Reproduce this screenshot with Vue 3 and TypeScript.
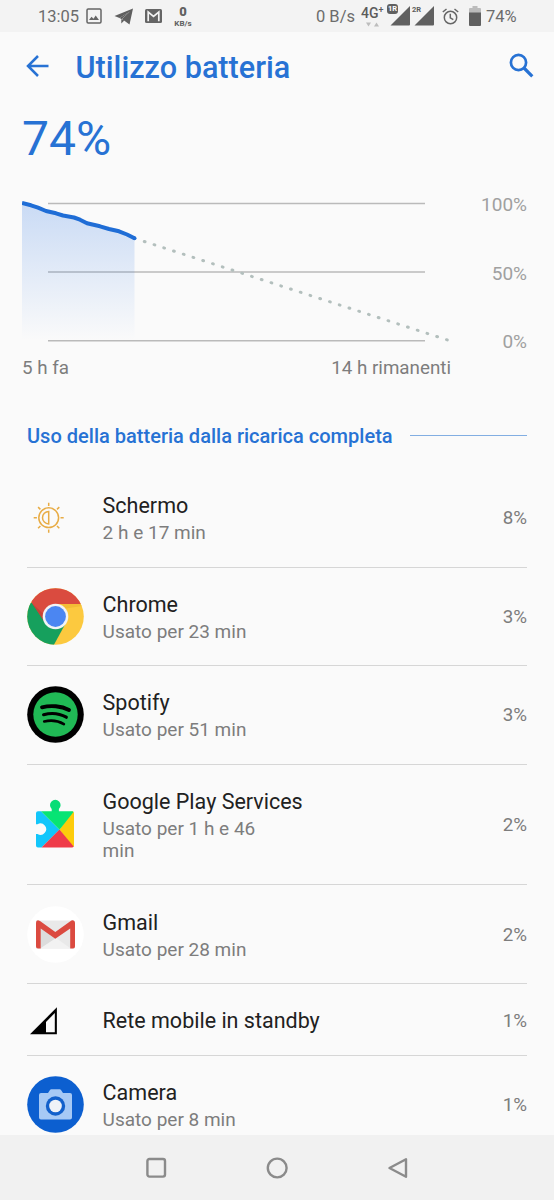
<script setup lang="ts">
import { ref } from 'vue'

type Usage = {
  icon: string
  name: string
  detail: string
  percent: number
}

const level = ref(74)

const usages = ref<Usage[]>([
  { icon: 'screen', name: 'Schermo', detail: '2 h e 17 min', percent: 8 },
  { icon: 'chrome', name: 'Chrome', detail: 'Usato per 23 min', percent: 3 },
  { icon: 'spotify', name: 'Spotify', detail: 'Usato per 51 min', percent: 3 },
  { icon: 'play', name: 'Google Play Services', detail: 'Usato per 1 h e 46 min', percent: 2 },
  { icon: 'gmail', name: 'Gmail', detail: 'Usato per 28 min', percent: 2 },
  { icon: 'signal', name: 'Rete mobile in standby', detail: '', percent: 1 },
  { icon: 'camera', name: 'Camera', detail: 'Usato per 8 min', percent: 1 }
])
</script>

<template>
  <div class="screen">
    <div class="status">
      <span class="clock">13:05</span>
      <svg class="picture" width="16" height="16" viewBox="0 0 16 16">
        <rect x="1" y="1" width="14" height="14" rx="1.2" fill="none" stroke="#656565" stroke-width="1.5" />
        <path d="M3 12l2.5-3.2 2 2 2.2-3.3L13 12z" fill="#656565" />
      </svg>
      <svg class="telegram" width="20" height="17" viewBox="0 0 20 17">
        <path d="M19 .5L.5 8l5 2L16 3.5 8 11l7.5 5.5z" fill="#5f5f5f" />
        <path d="M5.5 10L16 3.5 7.3 11.5v4l3-3z" fill="#5f5f5f" />
      </svg>
      <svg class="mail" width="17" height="14" viewBox="0 0 17 14">
        <rect width="17" height="14" rx="1.5" fill="#656565" />
        <path d="M3.2 12.2V3l5.3 4.4L13.8 3v9.2" fill="none" stroke="#f3f3f3" stroke-width="1.7" />
      </svg>
      <div class="rate"><b>0</b><span>KB/s</span></div>
      <span class="speed">0 B/s</span>
      <div class="network">
        <span>4G<sup>+</sup></span>
        <svg width="13" height="5" viewBox="0 0 13 5">
          <path d="M0 .5h5L2.5 4.5zM8 4.5h5L10.5.5z" fill="#bdbdbd" />
        </svg>
      </div>
      <div class="bars first">
        <svg width="20" height="20" viewBox="0 0 20 20"><path d="M20 0v18.500q0 1-1 1H.5z" fill="#606060" /></svg>
        <i class="sim filled">1R</i>
      </div>
      <div class="bars">
        <svg width="20" height="20" viewBox="0 0 20 20"><path d="M20 0v18.500q0 1-1 1H.5z" fill="#606060" /></svg>
        <i class="sim">2R</i>
      </div>
      <svg class="alarm" width="17" height="17" viewBox="0 0 17 17" fill="none" stroke="#666" stroke-width="1.5">
        <circle cx="8.5" cy="9.5" r="6.2" />
        <path d="M8.3 5.8v4l3 1.9M.8 4L4.5 1M16.2 4L12.5 1" />
      </svg>
      <svg class="battery" width="12" height="20" viewBox="0 0 12 20">
        <path d="M3.5 0h5v2H11q1 0 1 1v4H0V3q0-1 1-1h2.5z" fill="#bcbcbc" />
        <path d="M0 6.500h12V19q0 1-1 1H1q-1 0-1-1z" fill="#606060" />
      </svg>
      <span class="charge">{{ level }}%</span>
    </div>

    <header class="bar">
      <svg class="back" width="24" height="24" viewBox="0 0 24 24" fill="none" stroke="#2772d4" stroke-width="2.5">
        <path d="M22.5 12H3M12 2L2 12l10 10" />
      </svg>
      <h1>Utilizzo batteria</h1>
      <svg class="search" width="25" height="25" viewBox="0 0 25 25" fill="none" stroke="#2772d4">
        <circle cx="9.5" cy="9.5" r="7.6" stroke-width="2.7" />
        <path d="M15 15l8.3 8.3" stroke-width="3.2" />
      </svg>
    </header>

    <main>
      <div class="level">{{ level }}%</div>

      <div class="chart">
        <svg width="430" height="150" viewBox="0 0 430 150">
          <defs>
            <linearGradient id="fade" x1="0" y1="0" x2="0" y2="1">
              <stop offset="0" stop-color="#2772e4" stop-opacity=".23" />
              <stop offset="1" stop-color="#2772e4" stop-opacity="0" />
            </linearGradient>
          </defs>
          <path d="M26 8.5h377M26 77h377M26 145.800h377" stroke="#bababa" stroke-width="1.6" />
          <path d="M0 8L14 12l11 5 15 4 14 3 12 6 16 4 17 4 13.5 5V145H0z" fill="url(#fade)" />
          <path
            d="M0 8L9 10.3 16 12.6 24 16 34 18.3 41 20.5 52 22.5 58 24.7 65 28.3 78 31.3 87 34 97 36.3 105 39.5 112.5 43.2"
            fill="none" stroke="#1f6dd6" stroke-width="4" stroke-linejoin="round"
          />
          <circle cx="112.5" cy="43.2" r="2" fill="#1f6dd6" />
          <path
            d="M122.3 46.5L427 145.5" fill="none" stroke="#b3bfbd" stroke-width="3"
            stroke-linecap="round" stroke-dasharray=".8 9.45"
          />
        </svg>
        <div class="scale">
          <span>100%</span>
          <span>50%</span>
          <span>0%</span>
        </div>
      </div>
      <div class="range">
        <span>5 h fa</span>
        <span>14 h rimanenti</span>
      </div>

      <div class="section">
        <h2>Uso della batteria dalla ricarica completa</h2>
        <span class="rule"></span>
      </div>

      <ul>
        <li v-for="item in usages" :key="item.name" :class="{ single: !item.detail }">
          <div class="icon">
            <svg v-if="item.icon === 'screen'" width="57" height="57" viewBox="0 0 57 57" fill="none" stroke="#e8ac45" stroke-width="1.5">
              <circle cx="21.7" cy="28.7" r="9.9" />
              <path d="M21.7 22.5a6.200 6.200 0 0 0 0 12.400z" />
              <path d="M21.7 13.7v3.2M21.7 40.5v3.2M6.7 28.7h3.2M33.5 28.7h3.2M11.1 18.1l2.3 2.3M30 37l2.3 2.3M11.1 39.3l2.3-2.3M30 20.4l2.3-2.3" />
            </svg>
            <svg v-else-if="item.icon === 'chrome'" width="57" height="57" viewBox="0 0 57 57">
              <clipPath id="disc"><circle cx="28.5" cy="28.5" r="28.3" /></clipPath>
              <g clip-path="url(#disc)">
                <path d="M0 0h57v57H0z" fill="#fcc93f" />
                <path d="M4.9 14.8L0 14v43h26.8L39 34.7 28.5 28.5z" fill="#16a05d" />
                <path d="M28.5 28.5L17.5 34 4.5 14.5V0H57v15.900H28.5z" fill="#da4b3f" />
                <path d="M34 15.900h20l1 2-16.500 2.500z" fill="#e9b02c" opacity=".5" />
                <path d="M5 15.200L17.500 34l-1.200-8z" fill="#a8362d" opacity=".4" />
              </g>
              <circle cx="28.5" cy="28.5" r="12.8" fill="#f2f3f5" />
              <circle cx="28.5" cy="28.5" r="10.4" fill="#4b86f2" />
            </svg>
            <svg v-else-if="item.icon === 'spotify'" width="57" height="57" viewBox="0 0 57 57">
              <circle cx="28.5" cy="28.5" r="28.3" fill="#000" />
              <circle cx="28.5" cy="28.5" r="22.2" fill="#20b955" />
              <g fill="none" stroke="#000" stroke-linecap="round">
                <path d="M15 21.300c8.500-2.200 19.300-1.500 27 2.700" stroke-width="3.8" />
                <path d="M16.600 28.700c7.400-2 16.500-1 22.700 2.500" stroke-width="3.2" />
                <path d="M17.200 35.500c6.500-1.500 14-.7 19.700 2.600" stroke-width="2.6" />
              </g>
            </svg>
            <svg v-else-if="item.icon === 'play'" width="57" height="57" viewBox="0 0 57 57">
              <path d="M24.700 17v-4a5.300 5.300 0 1 1 7.200 0v4z" fill="#07dd76" />
              <path d="M11 15.300q-2 0-2 2v10.900h1.500a5.700 5.700 0 1 1 0 9.800H9v11.500q0 2 2 2h3.500L32.500 33.800 14 15.300z" fill="#12c6fb" />
              <path d="M45 15.300q2 .2 2 2v32q0 1-.8 1.700L32.500 33.800z" fill="#fdcc0b" />
              <path d="M32.500 33.500L14.500 51.500H45q1.200 0 1.700-1z" fill="#ef3b49" />
              <path d="M14 15.300h31q1 0 1.500.6L32.500 33.800z" fill="#07e474" />
            </svg>
            <svg v-else-if="item.icon === 'gmail'" width="57" height="57" viewBox="0 0 57 57">
              <circle cx="28.5" cy="28.5" r="28.3" fill="#fff" />
              <path d="M9 14.500h38.500v28H9z" fill="#e9e9e9" />
              <path d="M13 42.500l15.300-11 15.400 11z" fill="#f2f2f2" />
              <path d="M13 21.500l15.300 11-15.300 10z" fill="#dcdcdc" />
              <path d="M9 17v23.500q0 2 2 2h2.700V22.500l14.600 10.300 14.900-10.300v20H46q2 0 2-2V17q-.2-2.800-2.700-2.700-.9 0-1.600.6L28.300 26 13 14.900q-4-1.800-4 2.100z" fill="#db4a40" />
            </svg>
            <svg v-else-if="item.icon === 'signal'" width="57" height="57" viewBox="0 0 57 57">
              <path d="M29.900 15.300v27H3z" fill="#000" />
              <path d="M27.800 21v19.300H19V30z" fill="#fafafa" />
            </svg>
            <svg v-else width="57" height="57" viewBox="0 0 57 57">
              <circle cx="28.5" cy="28.5" r="28.3" fill="#0c5fd0" />
              <path d="M14 17h7l2-3q.4-.7 1.200-.7h8.500q.9 0 1.300.7l2 3h7q2 0 2 2v22.500q0 2-2 2H14q-2 0-2-2V19q0-2 2-2z" fill="#a6c9f5" />
              <circle cx="28.5" cy="30" r="9.7" fill="#1260cb" />
              <circle cx="28.5" cy="30" r="6.3" fill="#eff2f7" />
            </svg>
          </div>
          <div class="text">
            <div class="name">{{ item.name }}</div>
            <div v-if="item.detail" class="detail">{{ item.detail }}</div>
          </div>
          <span class="percent">{{ item.percent }}%</span>
        </li>
      </ul>
    </main>

    <nav>
      <svg width="24" height="24" viewBox="0 0 24 24"><rect x="3.4" y="3" width="17.6" height="17.6" rx="2" /></svg>
      <svg width="24" height="24" viewBox="0 0 24 24"><circle cx="12.2" cy="12" r="9.4" /></svg>
      <svg width="24" height="24" viewBox="0 0 24 24"><path d="M20 3.200v17.600L3.500 12z" /></svg>
    </nav>
  </div>
</template>

<style>
body {
  background: #fafafa;
}
</style>

<style scoped>
.screen {
  width: 554px;
  height: 1200px;
  display: flex;
  flex-direction: column;
  overflow: hidden;
  background: #fafafa;
  font-family: Roboto, "Liberation Sans", sans-serif;
  color: #7d7d7d;
}

svg {
  display: block;
  flex: none;
}

.status {
  height: 32px;
  flex: none;
  display: flex;
  align-items: center;
  box-sizing: border-box;
  padding-left: 38px;
  background: #f3f3f3;
  color: #6c6c6c;
  font-size: 16.5px;
  white-space: nowrap;
}

.clock {
  width: 48px;
  padding-top: 1px;
}

.telegram {
  margin-left: 12px;
}

.mail {
  margin-left: 11px;
}

.rate {
  width: 22px;
  margin-left: 10px;
  display: flex;
  flex-direction: column;
  align-items: center;
  line-height: 9px;
  font-size: 8px;
  font-weight: 700;
  color: #606060;
}

.rate b {
  font-size: 13px;
  line-height: 14px;
}

.speed {
  width: 45px;
  margin-left: 122px;
  padding-top: 1px;
}

.network {
  width: 23px;
  display: flex;
  flex-direction: column;
  font-size: 14px;
  font-weight: 500;
  line-height: 15px;
  color: #5c5c5c;
}

.network sup {
  font-size: 9px;
  line-height: 0;
  vertical-align: 5px;
}

.network svg {
  margin: 1px 0 0 5px;
}

.bars {
  position: relative;
  margin-left: 4px;
}

.bars.first {
  margin-left: 6px;
}

.sim {
  position: absolute;
  left: -2px;
  top: 0;
  font-size: 7.5px;
  line-height: 8px;
  font-style: normal;
  font-weight: 700;
  color: #5c5c5c;
}

.sim.filled {
  left: -3px;
  top: -2px;
  padding: 1px;
  border-radius: 3px;
  background: #606060;
  color: #fff;
}

.alarm {
  margin-left: 8px;
}

.battery {
  margin-left: 10px;
}

.charge {
  margin-left: 5px;
  padding-top: 1px;
}

.bar {
  height: 68px;
  flex: none;
  display: flex;
  align-items: center;
  padding: 0 20px 0 26px;
  color: #2772d4;
}

h1 {
  flex: 1;
  margin: 4px 0 0 25.6px;
  font-size: 30.6px;
  font-weight: 500;
  line-height: 36px;
}

.search {
  margin-bottom: 2px;
}

main {
  flex: 1;
  min-height: 0;
  overflow: hidden;
}

.level {
  height: 95px;
  padding: 10px 0 0 22px;
  box-sizing: border-box;
  font-size: 48px;
  line-height: 58px;
  color: #2772d4;
}

.chart {
  display: flex;
  justify-content: space-between;
  height: 150px;
  padding: 0 27px 0 22px;
}

.scale {
  display: flex;
  flex-direction: column;
  justify-content: space-between;
  height: 157px;
  text-align: right;
  font-size: 19px;
  line-height: 20px;
  color: #a0a0a0;
}

.range {
  display: flex;
  justify-content: space-between;
  padding: 12px 103px 0 22px;
  font-size: 18.8px;
  line-height: 22px;
}

.section {
  display: flex;
  align-items: center;
  height: 24px;
  margin: 45px 27px 21px;
}

h2 {
  margin: 0;
  font-size: 20.05px;
  font-weight: 500;
  color: #2772d4;
  white-space: nowrap;
}

.rule {
  flex: 1;
  height: 1px;
  margin: 0 0 1px 17px;
  background: #82aee2;
}

ul {
  list-style: none;
  margin: 0;
  padding: 0 27px;
}

li {
  display: flex;
  align-items: center;
  box-sizing: border-box;
  padding: 23.2px 0 22.4px;
  border-bottom: 1px solid #d6d6d6;
}

li.single {
  height: 72px;
  padding: 3px 0 0;
}

.icon {
  width: 75.6px;
  flex: none;
}

.text {
  flex: 1;
}

.name {
  font-size: 21.5px;
  line-height: 28px;
  color: #212121;
}

.detail {
  width: 170px;
  margin-top: 2px;
  font-size: 19px;
  line-height: 22px;
}

.icon svg {
  margin: -5px 0 -4px;
}

.percent {
  font-size: 18.8px;
}

nav {
  height: 65px;
  flex: none;
  display: flex;
  justify-content: center;
  align-items: center;
  gap: 97px;
  background: #f1f1f1;
}

nav svg {
  fill: none;
  stroke: #8b8b8b;
  stroke-width: 2.4;
  stroke-linejoin: round;
}
</style>
